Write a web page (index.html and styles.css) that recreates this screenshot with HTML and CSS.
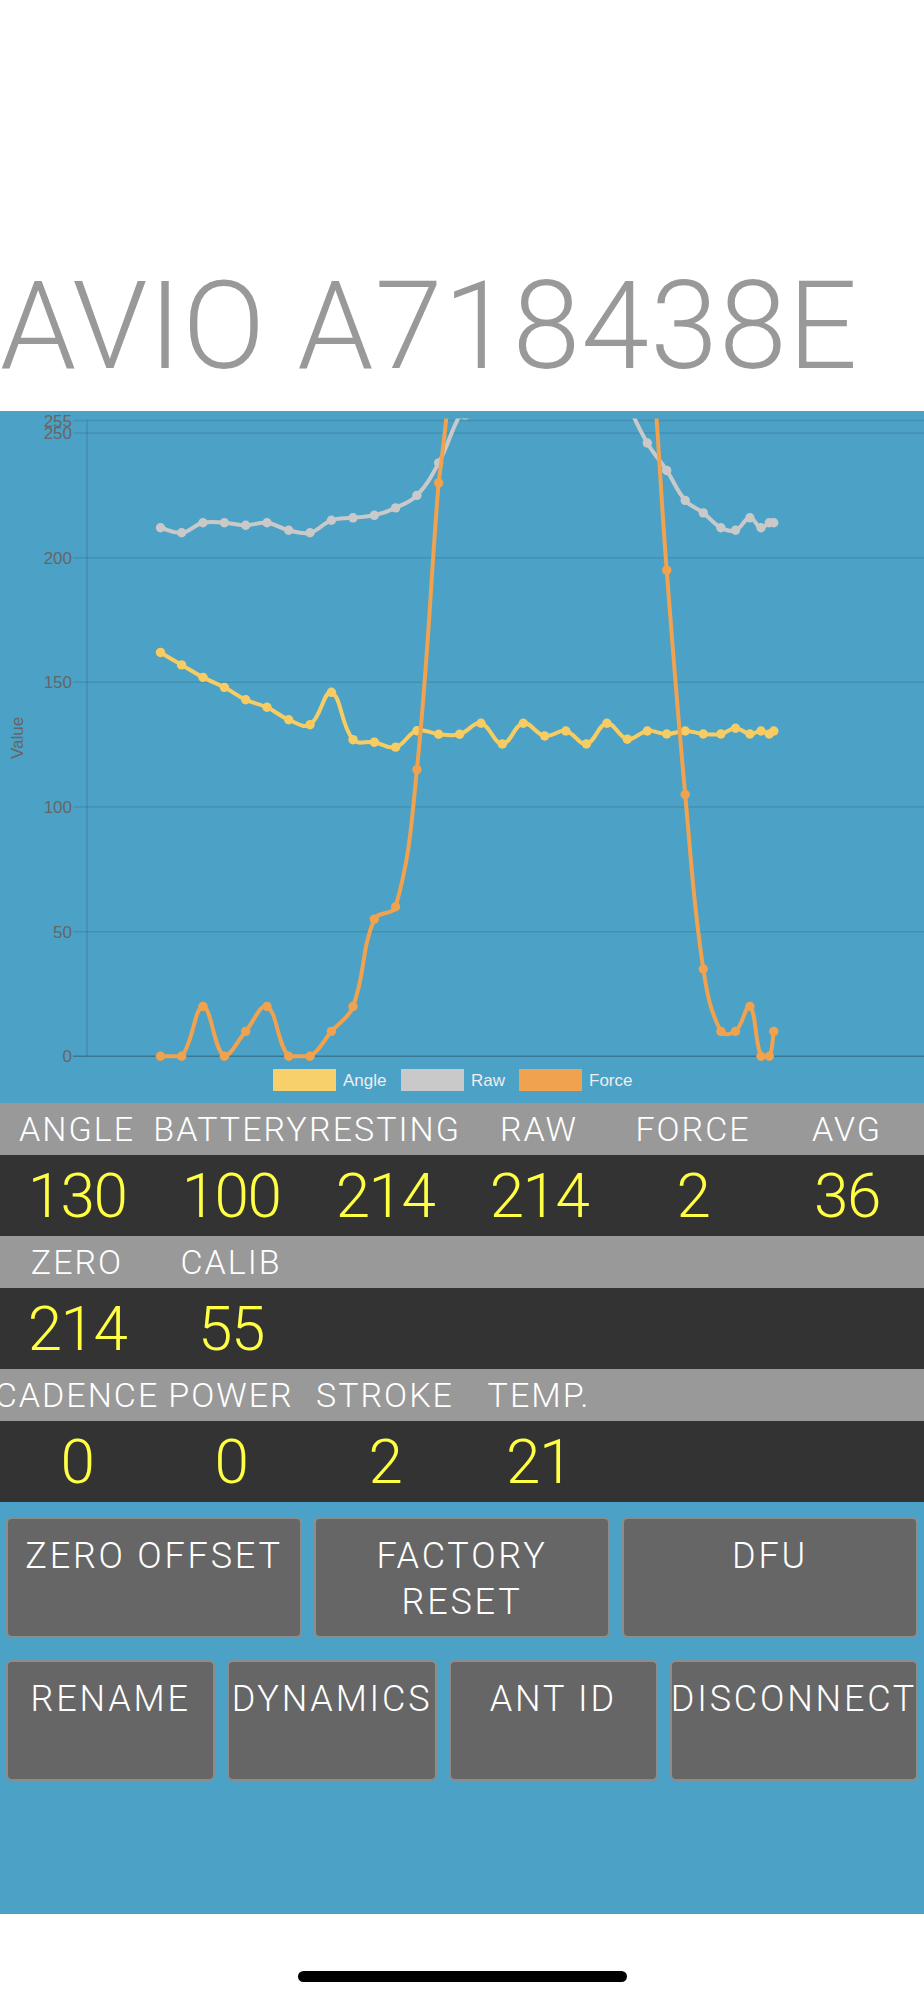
FILE: index.html
```html
<!DOCTYPE html>
<html lang="en">
<head>
<meta charset="utf-8">
<title>AVIO A718438E</title>
<link rel="stylesheet" href="styles.css">
</head>
<body>
<div class="app">
  <header class="title-bar">
    <h1 class="device-name">AVIO A718438E</h1>
  </header>

  <section class="chart-panel">
    <svg class="chart-svg" width="924" height="692" viewBox="0 0 924 692" xmlns="http://www.w3.org/2000/svg">
      <defs>
        <clipPath id="plot-clip"><rect x="0" y="7.6" width="924" height="684.4"/></clipPath>
      </defs>
      <g class="grid">
        <line x1="73" y1="9.6" x2="924" y2="9.6"/>
        <line x1="73" y1="22.05" x2="924" y2="22.05"/>
        <line x1="73" y1="146.7" x2="924" y2="146.7"/>
        <line x1="73" y1="271.35" x2="924" y2="271.35"/>
        <line x1="73" y1="396" x2="924" y2="396"/>
        <line x1="73" y1="520.65" x2="924" y2="520.65"/>
        <line class="axis-line" x1="87" y1="9.6" x2="87" y2="645.3"/>
        <line class="zero-line" x1="73" y1="645.3" x2="924" y2="645.3"/>
      </g>
      <g class="tick-labels">
        <text x="72" y="15.7">255</text>
        <text x="72" y="28.15">250</text>
        <text x="72" y="152.8">200</text>
        <text x="72" y="277.45">150</text>
        <text x="72" y="402.1">100</text>
        <text x="72" y="526.75">50</text>
        <text x="72" y="651.4">0</text>
      </g>
      <text class="axis-title" transform="translate(17 327) rotate(-90)">Value</text>
      <g id="series" data-top="9.6" data-bottom="645.3" data-left="87" data-right="924" data-zero="645.3" data-scale="2.493"></g>
      <g class="legend">
        <rect class="swatch swatch-angle" x="273" y="658" width="63" height="22"/>
        <text x="343" y="675">Angle</text>
        <rect class="swatch swatch-raw" x="401" y="658" width="63" height="22"/>
        <text x="471" y="675">Raw</text>
        <rect class="swatch swatch-force" x="519" y="658" width="63" height="22"/>
        <text x="589" y="675">Force</text>
      </g>
    </svg>
  </section>

  <section class="readouts">
    <div class="label-row">
      <span class="cell">ANGLE</span>
      <span class="cell">BATTERY</span>
      <span class="cell">RESTING</span>
      <span class="cell">RAW</span>
      <span class="cell">FORCE</span>
      <span class="cell">AVG</span>
    </div>
    <div class="value-row">
      <span class="cell">130</span>
      <span class="cell">100</span>
      <span class="cell">214</span>
      <span class="cell">214</span>
      <span class="cell">2</span>
      <span class="cell">36</span>
    </div>
    <div class="label-row">
      <span class="cell">ZERO</span>
      <span class="cell">CALIB</span>
    </div>
    <div class="value-row">
      <span class="cell">214</span>
      <span class="cell">55</span>
    </div>
    <div class="label-row">
      <span class="cell">CADENCE</span>
      <span class="cell">POWER</span>
      <span class="cell">STROKE</span>
      <span class="cell">TEMP.</span>
    </div>
    <div class="value-row">
      <span class="cell">0</span>
      <span class="cell">0</span>
      <span class="cell">2</span>
      <span class="cell">21</span>
    </div>
  </section>

  <section class="controls">
    <div class="btn-row">
      <button class="btn">ZERO OFFSET</button>
      <button class="btn">FACTORY RESET</button>
      <button class="btn">DFU</button>
    </div>
    <div class="btn-row">
      <button class="btn">RENAME</button>
      <button class="btn">DYNAMICS</button>
      <button class="btn">ANT ID</button>
      <button class="btn btn-wide">DISCONNECT</button>
    </div>
  </section>

  <footer class="home-area">
    <div class="home-indicator"></div>
  </footer>
</div>
<script src="script.js"></script>
</body>
</html>
```

FILE: styles.css
```css
* {
  box-sizing: border-box;
}

body {
  margin: 0;
  background: #ffffff;
  font-family: Roboto, "Liberation Sans", Arial, sans-serif;
  font-weight: 300;
}

.app {
  width: 924px;
}

/* ---------- title ---------- */
.title-bar {
  height: 411px;
  padding-top: 266px;
  overflow: hidden;
}

.device-name {
  margin: 0;
  font-size: 122px;
  line-height: 122px;
  font-weight: 300;
  color: #999999;
  white-space: nowrap;
  letter-spacing: 1.2px;
}

/* ---------- chart ---------- */
.chart-panel {
  height: 692px;
  background: #4ca1c6;
}

.chart-svg {
  display: block;
}

.grid line {
  stroke: rgba(0, 0, 0, 0.1);
  stroke-width: 1.5;
}

.grid .zero-line {
  stroke: rgba(0, 0, 0, 0.25);
}

.grid .axis-line {
  stroke: rgba(0, 0, 0, 0.12);
}

.tick-labels text {
  font-family: "Liberation Sans", Arial, sans-serif;
  font-size: 17px;
  fill: #666666;
  text-anchor: end;
}

.axis-title {
  font-family: "Liberation Sans", Arial, sans-serif;
  font-size: 17px;
  fill: #666666;
  text-anchor: middle;
  dominant-baseline: central;
}

.legend text {
  font-family: "Liberation Sans", Arial, sans-serif;
  font-size: 17px;
  fill: #eeeeee;
}

.swatch-angle { fill: #f7cf6b; }
.swatch-raw { fill: #c9c9c9; }
.swatch-force { fill: #f0a24f; }

.series-line {
  fill: none;
  stroke-width: 4;
  stroke-linejoin: round;
}

/* ---------- readouts ---------- */
.label-row,
.value-row {
  display: grid;
  grid-template-columns: repeat(6, minmax(0, 1fr));
}

.label-row {
  height: 52px;
  background: #999999;
  color: #ffffff;
  font-size: 34px;
  line-height: 52px;
  letter-spacing: 2px;
}

.value-row {
  height: 81px;
  background: #333333;
  color: #ffff44;
  font-size: 62px;
  line-height: 81px;
  letter-spacing: -1.5px;
}

.cell {
  display: flex;
  justify-content: center;
  white-space: nowrap;
}

/* ---------- buttons ---------- */
.controls {
  height: 412px;
  background: #4ca1c6;
  padding: 15px 6px 0;
  display: flex;
  flex-direction: column;
  gap: 22px;
}

.btn-row {
  display: flex;
  gap: 12px;
  height: 121px;
}

.btn {
  flex: 1 1 0;
  min-width: 0;
  margin: 0;
  background: #666666;
  border: 2px solid #8c8c8c;
  border-radius: 6px;
  color: #ffffff;
  font-family: Roboto, "Liberation Sans", Arial, sans-serif;
  font-weight: 300;
  font-size: 36px;
  line-height: 46px;
  letter-spacing: 2.8px;
  padding: 14px 8px 0;
  text-align: center;
  display: flex;
  flex-direction: column;
  align-items: center;
  justify-content: flex-start;
}

.btn-wide {
  flex: 0 0 248px;
  padding: 14px 0 0;
  white-space: nowrap;
}

/* ---------- home indicator ---------- */
.home-area {
  height: 86px;
  padding-top: 57px;
  display: flex;
  justify-content: center;
  background: #ffffff;
}

.home-indicator {
  width: 329px;
  height: 11px;
  border-radius: 6px;
  background: #000000;
}
```

FILE: script.js
```js
(function () {
  var NS = "http://www.w3.org/2000/svg";
  var g = document.getElementById("series");
  var TOP = parseFloat(g.dataset.top);
  var BOTTOM = parseFloat(g.dataset.bottom);
  var LEFT = parseFloat(g.dataset.left);
  var RIGHT = parseFloat(g.dataset.right);
  var ZERO = parseFloat(g.dataset.zero);
  var K = parseFloat(g.dataset.scale);

  var xs = [160.5, 181.6, 203, 224.4, 245.7, 267, 288.7, 310, 331.4, 353, 374.3,
    395.6, 416.9, 438.6, 459.6, 481, 502.3, 523.3, 544.7, 565.8, 586.4, 606.9,
    627.3, 647.3, 666.7, 685.2, 703.3, 720.9, 735.5, 749.9, 761, 769.3, 773.8];

  var datasets = [
    {
      color: "#f7cd63",
      data: [162, 157, 152, 148, 143, 140, 135, 133, 146, 127, 126, 124, 130.6, 129.2,
        129.2, 133.6, 125.3, 133.6, 128.5, 130.5, 125.3, 133.6, 127.2, 130.5, 129.3,
        130.5, 129.3, 129.3, 131.6, 129.3, 130.5, 129.3, 130.5]
    },
    {
      color: "#c9c9c9",
      data: [212, 210, 214, 214, 213, 214, 211, 210, 215, 216, 217, 220, 225, 238,
        257, 270, 280, 285, 288, 288, 284, 276, 262, 246, 235, 223, 218, 212, 211,
        216, 212, 214, 214]
    },
    {
      color: "#f0a24e",
      data: [0, 0, 20, 0, 10, 20, 0, 0, 10, 20, 55, 60, 115, 230, 330, 370, 395,
        405, 410, 410, 400, 380, 340, 300, 195, 105, 35, 10, 10, 20, 0, 0, 10]
    }
  ];

  function clamp(v, lo, hi) {
    return Math.max(Math.min(v, hi), lo);
  }

  function el(name, attrs) {
    var e = document.createElementNS(NS, name);
    for (var k in attrs) e.setAttribute(k, attrs[k]);
    return e;
  }

  datasets.forEach(function (ds) {
    var pts = xs.map(function (x, i) {
      return { x: x, y: ZERO - ds.data[i] * K };
    });
    var t = 0.4;
    pts.forEach(function (p, i) {
      var prev = pts[i - 1] || p;
      var next = pts[i + 1] || p;
      var d01 = Math.hypot(p.x - prev.x, p.y - prev.y);
      var d12 = Math.hypot(next.x - p.x, next.y - p.y);
      var s01 = d01 / (d01 + d12);
      var s12 = d12 / (d01 + d12);
      if (isNaN(s01)) s01 = 0;
      if (isNaN(s12)) s12 = 0;
      var fa = t * s01, fb = t * s12;
      p.cpx = clamp(p.x - fa * (next.x - prev.x), LEFT, RIGHT);
      p.cpy = clamp(p.y - fa * (next.y - prev.y), TOP, BOTTOM);
      p.cnx = clamp(p.x + fb * (next.x - prev.x), LEFT, RIGHT);
      p.cny = clamp(p.y + fb * (next.y - prev.y), TOP, BOTTOM);
    });
    var d = "M" + pts[0].x + " " + pts[0].y;
    for (var i = 1; i < pts.length; i++) {
      var a = pts[i - 1], b = pts[i];
      d += " C" + a.cnx.toFixed(2) + " " + a.cny.toFixed(2) + " " +
        b.cpx.toFixed(2) + " " + b.cpy.toFixed(2) + " " +
        b.x.toFixed(2) + " " + b.y.toFixed(2);
    }
    var path = el("path", { d: d, "class": "series-line", stroke: ds.color, "clip-path": "url(#plot-clip)" });
    g.appendChild(path);
    pts.forEach(function (p) {
      if (p.y >= TOP - 0.001 && p.y <= BOTTOM + 0.001) {
        g.appendChild(el("circle", { cx: p.x, cy: p.y.toFixed(2), r: 4.7, fill: ds.color }));
      }
    });
  });
})();
```
